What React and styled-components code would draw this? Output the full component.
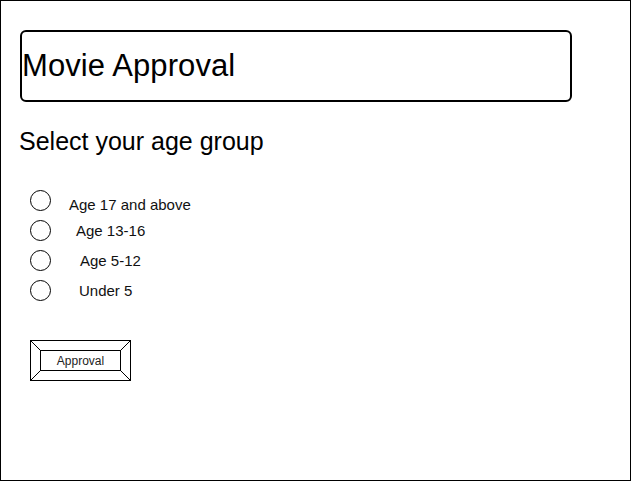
import React, { useState } from "react";
import styled, { createGlobalStyle } from "styled-components";

const GlobalStyle = createGlobalStyle`
  html, body {
    margin: 0;
    padding: 0;
    background: #fff;
  }
  body {
    font-family: "Liberation Sans", Arial, sans-serif;
    color: #000;
  }
`;

const Frame = styled.div`
  box-sizing: border-box;
  width: 631px;
  height: 481px;
  border: 1px solid #000;
  padding: 29px 0 0 18px;
  display: flex;
  flex-direction: column;
  align-items: flex-start;
`;

const TitleBox = styled.div`
  box-sizing: border-box;
  width: 552px;
  height: 72px;
  margin-left: 1px;
  border: 2px solid #000;
  border-radius: 6px;
  display: flex;
  align-items: center;
  padding: 0;
  font-size: 31px;
  letter-spacing: 0.1px;
`;

const Heading = styled.h2`
  margin: 25px 0 0 0;
  font-size: 25px;
  font-weight: normal;
  line-height: 29px;
`;

const RadioList = styled.div`
  margin-top: 29px;
  display: flex;
  flex-direction: column;
`;

const RadioRow = styled.label`
  height: 30px;
  display: flex;
  align-items: center;
  cursor: pointer;
  font-size: 15px;
  line-height: 17px;
`;

const Circle = styled.span`
  box-sizing: border-box;
  width: 21px;
  height: 21px;
  margin-left: 11px;
  border: 1.3px solid #000;
  border-radius: 50%;
  display: flex;
  align-items: center;
  justify-content: center;

  &::after {
    content: "";
    width: 11px;
    height: 11px;
    border-radius: 50%;
    background: #000;
    display: ${(p) => (p.$checked ? "block" : "none")};
  }
`;

const LabelText = styled.span`
  margin-left: ${(p) => p.$indent}px;
  transform: translateY(${(p) => p.$drop}px);
  color: #111;
`;

const ApproveButton = styled.button`
  position: relative;
  box-sizing: border-box;
  width: 101px;
  height: 41px;
  margin: 35px 0 0 11px;
  padding: 9px;
  border: 1px solid #000;
  background: #fff;
  cursor: pointer;
  font-family: inherit;
`;

const ButtonFace = styled.span`
  box-sizing: border-box;
  display: flex;
  align-items: center;
  justify-content: center;
  width: 100%;
  height: 100%;
  border: 1px solid #000;
  font-size: 12px;
  color: #222;
`;

const Bevel = styled.svg`
  position: absolute;
  left: 0;
  top: 0;
  width: 99px;
  height: 39px;
  pointer-events: none;
`;

const options = [
  { label: "Age 17 and above", indent: 18, drop: 4 },
  { label: "Age 13-16", indent: 25, drop: 0 },
  { label: "Age 5-12", indent: 29, drop: 0 },
  { label: "Under 5", indent: 28, drop: 0 },
];

const App = () => {
  const [selected, setSelected] = useState(null);

  return (
    <>
      <GlobalStyle />
      <Frame>
        <TitleBox>Movie Approval</TitleBox>
        <Heading>Select your age group</Heading>
        <RadioList>
          {options.map((opt, i) => (
            <RadioRow key={opt.label} onClick={() => setSelected(i)}>
              <Circle $checked={selected === i} />
              <LabelText $indent={opt.indent} $drop={opt.drop}>
                {opt.label}
              </LabelText>
            </RadioRow>
          ))}
        </RadioList>
        <ApproveButton>
          <Bevel viewBox="0 0 99 39">
            <line x1="0" y1="0" x2="9.5" y2="9.5" stroke="#000" strokeWidth="1" />
            <line x1="99" y1="0" x2="89.5" y2="9.5" stroke="#000" strokeWidth="1" />
            <line x1="0" y1="39" x2="9.5" y2="29.5" stroke="#000" strokeWidth="1" />
            <line x1="99" y1="39" x2="89.5" y2="29.5" stroke="#000" strokeWidth="1" />
          </Bevel>
          <ButtonFace>Approval</ButtonFace>
        </ApproveButton>
      </Frame>
    </>
  );
};

export default App;
